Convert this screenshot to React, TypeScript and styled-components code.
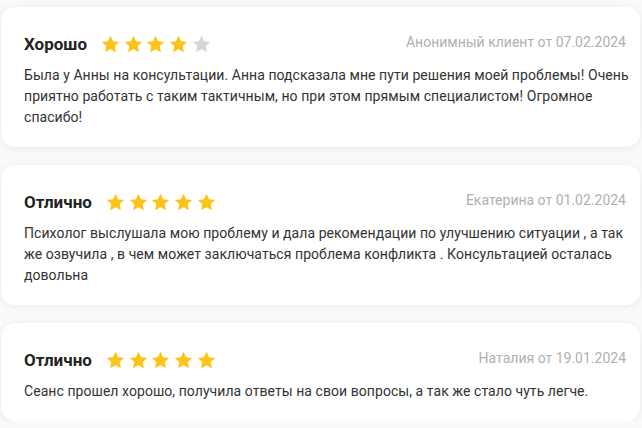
import React from "react";
import styled, { createGlobalStyle } from "styled-components";

const Global = createGlobalStyle`
  html, body { margin: 0; padding: 0; background: #fafafa; }
  body { font-family: Roboto, "Liberation Sans", Arial, sans-serif; }
`;

const List = styled.div`
  display: flex;
  flex-direction: column;
  gap: 18px;
  padding: 7px 2px 0 1px;
`;

const Card = styled.div`
  background: #fff;
  border-radius: 14px;
  box-shadow: 0 1px 10px rgba(0, 0, 0, 0.07);
  padding: 27px 8px 19px 23px;
`;

const Header = styled.div`
  display: flex;
  align-items: center;
  justify-content: space-between;
  height: 20px;
  margin-bottom: 11px;
  padding-right: 6px;
`;

const Left = styled.div`
  display: flex;
  align-items: center;
  gap: 14px;
`;

const Title = styled.span`
  font-size: 17px;
  font-weight: 700;
  color: #222;
  line-height: 20px;
`;

const Stars = styled.div`
  display: flex;
  gap: 3.7px;
`;

const Author = styled.span`
  font-size: 14px;
  color: #b0b0b0;
  line-height: 20px;
  margin-top: -4px;
`;

const Body = styled.p`
  margin: 0;
  font-size: 14px;
  letter-spacing: 0.06px;
  line-height: 21px;
  color: #333;
`;

const Star: React.FC<{ on: boolean }> = ({ on }) => (
  <svg width="19" height="18" viewBox="0 0 24 23">
    <path
      d="M12 0.8l3.35 7.1 7.75 0.95-5.7 5.35 1.5 7.7L12 18.1l-6.9 3.8 1.5-7.7L0.9 8.85l7.75-0.95z"
      fill={on ? "#fcc419" : "#d6d6d6"}
    />
  </svg>
);

const reviews = [
  {
    title: "Хорошо",
    rating: 4,
    author: "Анонимный клиент от 07.02.2024",
    text: "Была у Анны на консультации. Анна подсказала мне пути решения моей проблемы! Очень приятно работать с таким тактичным, но при этом прямым специалистом! Огромное спасибо!",
  },
  {
    title: "Отлично",
    rating: 5,
    author: "Екатерина от 01.02.2024",
    text: "Психолог выслушала мою проблему и дала рекомендации по улучшению ситуации , а так же озвучила , в чем может заключаться проблема конфликта . Консультацией осталась довольна",
  },
  {
    title: "Отлично",
    rating: 5,
    author: "Наталия от 19.01.2024",
    text: "Сеанс прошел хорошо, получила ответы на свои вопросы, а так же стало чуть легче.",
  },
];

export default function App() {
  return (
    <>
      <Global />
      <List>
        {reviews.map((r, i) => (
          <Card key={i}>
            <Header>
              <Left>
                <Title>{r.title}</Title>
                <Stars>
                  {[0, 1, 2, 3, 4].map((s) => (
                    <Star key={s} on={s < r.rating} />
                  ))}
                </Stars>
              </Left>
              <Author>{r.author}</Author>
            </Header>
            <Body>{r.text}</Body>
          </Card>
        ))}
      </List>
    </>
  );
}
